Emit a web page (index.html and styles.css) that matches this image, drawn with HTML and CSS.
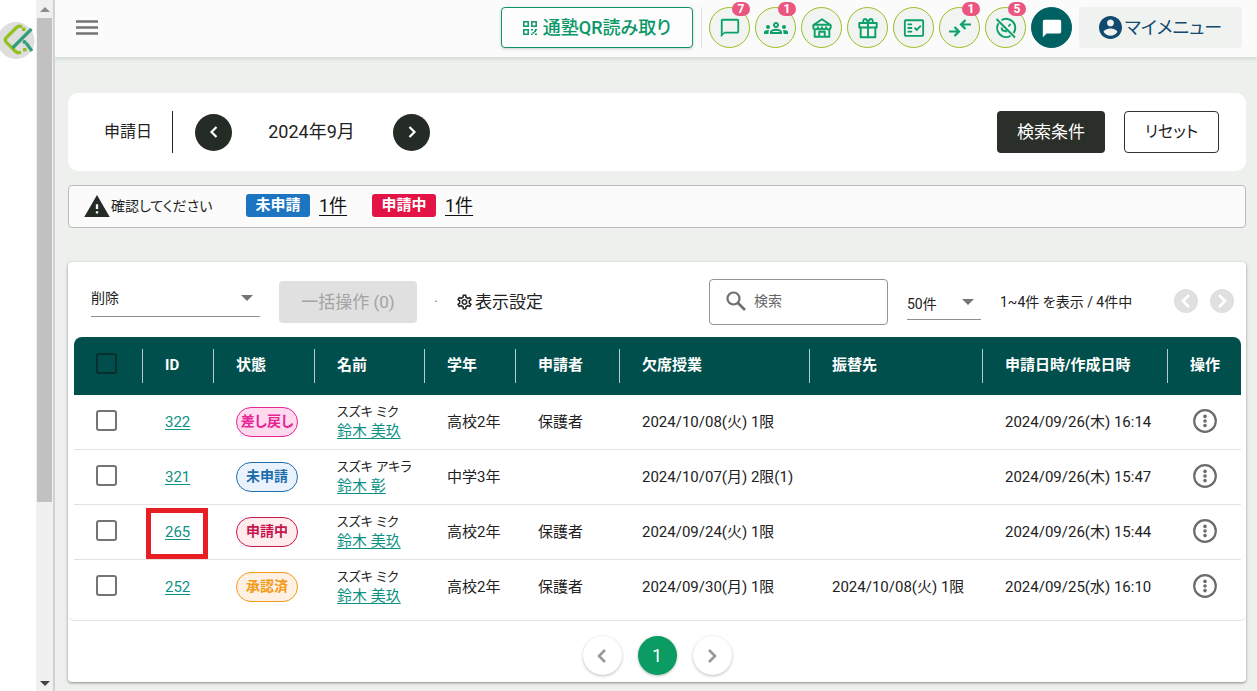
FILE: index.html
```html
<!DOCTYPE html>
<html lang="ja">
<head>
<meta charset="utf-8">
<meta name="viewport" content="width=device-width, initial-scale=1">
<title>申請一覧</title>
<link rel="stylesheet" href="styles.css">
</head>
<body>
<svg class="defs" aria-hidden="true">
  <symbol id="left" viewBox="0 0 24 24"><path d="M15 6l-6 6 6 6" fill="none" stroke="currentColor" stroke-width="2.6"/></symbol>
  <symbol id="right" viewBox="0 0 24 24"><path d="M9 6l6 6-6 6" fill="none" stroke="currentColor" stroke-width="2.6"/></symbol>
  <symbol id="more" viewBox="0 0 24 24"><circle cx="12" cy="12" r="10.8" fill="none" stroke="currentColor" stroke-width="2.2"/><g fill="currentColor"><circle cx="12" cy="7.4" r="1.8"/><circle cx="12" cy="12" r="1.8"/><circle cx="12" cy="16.6" r="1.8"/></g></symbol>
</svg>
<div class="shell">
  <aside class="rail">
    <svg class="logo" viewBox="0 0 35 37" role="img" aria-label="ロゴ">
      <circle cx="16" cy="18.5" r="18.5" fill="#dedede"/>
      <g fill="none" stroke-width="3.2">
        <path d="M22 5q-3-2-6 1L7 15q-3 2.500-1 5l9 9q3 3 6 1" stroke="#95c11f"/>
        <path d="M31.500 7L12.500 26" stroke="#2f9f78"/>
        <path d="M26 21l6 8" stroke="#2f9f78"/>
      </g>
      <g fill="#95c11f"><rect x="22" y="5.500" width="3.500" height="3.500"/><rect x="23" y="26" width="3.500" height="3.500"/></g>
      <circle cx="24.500" cy="20" r="2" fill="#2f9f78"/>
    </svg>
  </aside>
  <div class="scrollbar" aria-hidden="true"><i class="up"></i><div class="thumb"></div><i class="down"></i></div>
  <div class="page">
    <header class="topbar">
      <button class="plain menu" aria-label="メニュー"><svg viewBox="0 0 22 16"><path d="M0 1.500h22M0 7.500h22M0 13.500h22" stroke="#747474" stroke-width="2.400"/></svg></button>
      <button class="qr">
        <svg viewBox="0 0 14 14" fill="none" stroke="currentColor" stroke-width="1.500"><rect x=".8" y=".8" width="4.400" height="4.400"/><rect x="8.800" y=".8" width="4.400" height="4.400"/><rect x=".8" y="8.800" width="4.400" height="4.400"/><path d="M8 8.800h2M11 10.300h2M9.500 11.800h2M8 13.300h1.500M12 13.300h2M12 8.800h2" /></svg>
        <span>通塾QR読み取り</span>
      </button>
      <nav class="icons">
        <button class="round" aria-label="メッセージ"><svg viewBox="0 0 24 24" fill="currentColor"><path d="M20 2H4c-1.100 0-2 .9-2 2v18l4-4h14c1.100 0 2-.9 2-2V4c0-1.100-.9-2-2-2zm0 14H6l-2 2V4h16v12z"/></svg><span class="count">7</span></button>
        <button class="round" aria-label="グループ"><svg class="wide" viewBox="0 0 24 24" fill="currentColor"><path d="M4 13c1.100 0 2-.9 2-2s-.9-2-2-2-2 .9-2 2 .9 2 2 2zm1.130 1.100c-.37-.06-.74-.1-1.130-.1-.99 0-1.930.21-2.780.58C.48 14.900 0 15.620 0 16.430V18h4.500v-1.610c0-.83.23-1.610.63-2.290zM20 13c1.100 0 2-.9 2-2s-.9-2-2-2-2 .9-2 2 .9 2 2 2zm4 3.430c0-.81-.48-1.530-1.220-1.850-.85-.37-1.790-.58-2.780-.58-.39 0-.76.04-1.130.1.400.68.63 1.460.63 2.290V18H24v-1.570zm-7.760-2.780c-1.170-.52-2.610-.9-4.240-.9-1.630 0-3.070.39-4.240.9C6.680 14.130 6 15.210 6 16.390V18h12v-1.610c0-1.180-.68-2.260-1.760-2.740zM8.070 16c.09-.23.13-.39.91-.69.97-.38 1.990-.56 3.020-.56s2.050.18 3.020.56c.77.3.81.46.91.69H8.070zM12 8c.55 0 1 .45 1 1s-.45 1-1 1-1-.45-1-1 .45-1 1-1m0-2c-1.660 0-3 1.340-3 3s1.340 3 3 3 3-1.340 3-3-1.340-3-3-3z"/></svg><span class="count">1</span></button>
        <button class="round" aria-label="教室"><svg viewBox="0 0 24 24" fill="none" stroke="currentColor" stroke-width="2.100" stroke-linejoin="round"><path d="M12 2.500L3 8.500h18zM2.500 8.500v2.300c0 1.600 1.200 2.700 2.700 2.700s2.300-.9 2.300-2.300c0 1.400 1 2.300 2.300 2.300s2.200-.9 2.200-2.300c0 1.400 1 2.300 2.200 2.300s2.300-.9 2.300-2.300c0 1.400.8 2.300 2.300 2.300s2.700-1.100 2.700-2.700V8.500M4 13.500v8h16v-8M9 21v-5h6v5"/></svg></button>
        <button class="round" aria-label="ギフト"><svg viewBox="0 0 24 24" fill="none" stroke="currentColor" stroke-width="2.100" stroke-linejoin="round"><path d="M2.500 6.500h19v5h-19zM4 11.500v10.500h16V11.500M12 6.500V22M12 6C11 3 9.500 2 8 2.300S6.300 6 8 6.500M12 6c1-3 2.500-4 4-3.700s1.700 3.700 0 4.200"/></svg></button>
        <button class="round" aria-label="チェックリスト"><svg viewBox="0 0 24 24" fill="none" stroke="currentColor" stroke-width="2"><rect x="2" y="3.500" width="20" height="17" rx="1"/><path d="M5 8h5M5 12h5M5 16h5M12.500 11.500l2.500 2.500 4.500-4.500"/></svg></button>
        <button class="round" aria-label="振替"><svg class="wide" viewBox="0 0 24 24" fill="none" stroke="currentColor" stroke-width="2.200"><path d="M1 15.500h9M6.500 11l4.500 4.500L6.500 20M23 8.500h-9M17.500 4L13 8.500l4.500 4.500"/></svg><span class="count">1</span></button>
        <button class="round" aria-label="欠席"><svg class="wide" viewBox="0 0 24 24" fill="none" stroke="currentColor" stroke-width="2"><path d="M7.500 4.200a9 9 0 0 1 12 13M16.500 19.900A9 9 0 0 1 4.500 7.300M2.500 3l18.500 18.500M7.500 11.500l1 3 4.500 1M14.500 10.500l2-2.500"/></svg><span class="count">5</span></button>
        <button class="round solid" aria-label="チャット"><svg viewBox="0 0 24 24" fill="currentColor"><path d="M20 3H4c-1.100 0-2 .9-2 2v17l4-4h14c1.100 0 2-.9 2-2V5c0-1.100-.9-2-2-2z"/></svg></button>
      </nav>
      <button class="my"><svg viewBox="2 2 20 20" fill="currentColor"><path d="M12 2C6.480 2 2 6.480 2 12s4.480 10 10 10 10-4.480 10-10S17.520 2 12 2zm0 3c1.660 0 3 1.340 3 3s-1.340 3-3 3-3-1.340-3-3 1.340-3 3-3zm0 14.200c-2.500 0-4.710-1.280-6-3.220.03-1.990 4-3.080 6-3.080 1.990 0 5.970 1.090 6 3.080-1.290 1.940-3.500 3.220-6 3.220z"/></svg><span>マイメニュー</span></button>
    </header>
    <main class="content">
      <section class="card period">
        <span class="period-label">申請日</span>
        <button class="nav-dot" aria-label="前の月"><svg><use href="#left"/></svg></button>
        <span class="month">2024年9月</span>
        <button class="nav-dot" aria-label="次の月"><svg><use href="#right"/></svg></button>
        <button class="btn dark">検索条件</button>
        <button class="btn outline">リセット</button>
      </section>
      <section class="notice">
        <svg class="warn" viewBox="1 2 22 19" fill="#252b25"><path d="M1 21h22L12 2 1 21zm12-3h-2v-2h2v2zm0-4h-2v-4h2v4z"/></svg>
        <span class="notice-text">確認してください</span>
        <span class="tag blue">未申請</span><a href="#" class="num">1件</a>
        <span class="tag red">申請中</span><a href="#" class="num">1件</a>
      </section>
      <section class="card list">
        <div class="tools">
          <div class="select bulk"><select aria-label="操作"><option>削除</option></select></div>
          <button class="btn off" disabled>一括操作 (0)</button>
          <span class="dot">·</span>
          <button class="plain settings"><svg viewBox="2 2 20 20" fill="currentColor"><path d="M19.430 12.980c.04-.32.07-.64.07-.98 0-.34-.03-.66-.07-.98l2.110-1.650c.19-.15.24-.42.12-.64l-2-3.460c-.09-.16-.26-.25-.44-.25-.06 0-.12.01-.17.03l-2.490 1c-.52-.4-1.080-.73-1.690-.98l-.38-2.650C14.460 2.180 14.250 2 14 2h-4c-.25 0-.46.18-.49.42l-.38 2.650c-.61.25-1.170.59-1.690.98l-2.490-1c-.06-.02-.12-.03-.18-.03-.17 0-.34.09-.43.25l-2 3.460c-.13.22-.07.49.12.64l2.110 1.650c-.04.32-.07.65-.07.98 0 .33.03.66.07.98l-2.110 1.650c-.19.15-.24.42-.12.64l2 3.460c.09.16.26.25.44.25.06 0 .12-.01.17-.03l2.490-1c.52.4 1.080.73 1.690.98l.38 2.650c.03.24.24.42.49.42h4c.25 0 .46-.18.49-.42l.38-2.650c.61-.25 1.170-.59 1.690-.98l2.490 1c.06.02.12.03.18.03.17 0 .34-.09.43-.25l2-3.460c.12-.22.07-.49-.12-.64l-2.110-1.650zm-1.980-1.710c.04.31.05.52.05.73 0 .21-.02.43-.05.73l-.14 1.130.89.7 1.080.84-.7 1.210-1.270-.51-1.040-.42-.9.68c-.43.32-.84.56-1.250.73l-1.060.43-.16 1.130-.2 1.350h-1.400l-.19-1.350-.16-1.130-1.060-.43c-.43-.18-.83-.41-1.230-.71l-.91-.7-1.060.43-1.270.51-.7-1.210 1.080-.84.89-.7-.14-1.130c-.03-.31-.05-.54-.05-.74s.02-.43.05-.73l.14-1.130-.89-.7-1.080-.84.7-1.210 1.270.51 1.040.42.9-.68c.43-.32.84-.56 1.250-.73l1.060-.43.16-1.130.2-1.350h1.390l.19 1.350.16 1.130 1.060.43c.43.18.83.41 1.230.71l.91.7 1.060-.43 1.270-.51.7 1.210-1.070.85-.89.7.14 1.130zM12 8c-2.210 0-4 1.790-4 4s1.790 4 4 4 4-1.790 4-4-1.790-4-4-4zm0 6c-1.100 0-2-.9-2-2s.9-2 2-2 2 .9 2 2-.9 2-2 2z"/></svg><span>表示設定</span></button>
          <label class="search"><svg viewBox="0 0 20 20" fill="none" stroke="#6f6f6f" stroke-width="2.200"><circle cx="7.500" cy="7.500" r="6"/><path d="M12 12l7 7" stroke-width="2.600"/></svg><input type="text" placeholder="検索" aria-label="検索"></label>
          <div class="select size"><select aria-label="表示件数"><option>50件</option></select></div>
          <span class="range">1~4件 を表示 / 4件中</span>
          <div class="mini-nav"><button disabled aria-label="前へ"><svg><use href="#left"/></svg></button><button disabled aria-label="次へ"><svg><use href="#right"/></svg></button></div>
        </div>
        <div class="table-wrap">
        <table>
          <colgroup><col class="c-check"><col class="c-id"><col class="c-state"><col class="c-name"><col class="c-grade"><col class="c-by"><col class="c-absent"><col class="c-makeup"><col class="c-date"><col class="c-act"></colgroup>
          <thead><tr><th><input type="checkbox" aria-label="すべて選択"></th><th>ID</th><th>状態</th><th>名前</th><th>学年</th><th>申請者</th><th>欠席授業</th><th>振替先</th><th>申請日時/作成日時</th><th>操作</th></tr></thead>
          <tbody>
            <tr><td><input type="checkbox" aria-label="322を選択"></td><td><a href="#">322</a></td><td><span class="pill pink">差し戻し</span></td><td><span class="kana">スズキ ミク</span><a href="#">鈴木 美玖</a></td><td>高校2年</td><td>保護者</td><td>2024/10/08(火) 1限</td><td></td><td>2024/09/26(木) 16:14</td><td><button class="plain more" aria-label="操作"><svg><use href="#more"/></svg></button></td></tr>
            <tr><td><input type="checkbox" aria-label="321を選択"></td><td><a href="#">321</a></td><td><span class="pill sky">未申請</span></td><td><span class="kana">スズキ アキラ</span><a href="#">鈴木 彰</a></td><td>中学3年</td><td></td><td>2024/10/07(月) 2限(1)</td><td></td><td>2024/09/26(木) 15:47</td><td><button class="plain more" aria-label="操作"><svg><use href="#more"/></svg></button></td></tr>
            <tr><td><input type="checkbox" aria-label="265を選択"></td><td class="marked"><a href="#">265</a></td><td><span class="pill rose">申請中</span></td><td><span class="kana">スズキ ミク</span><a href="#">鈴木 美玖</a></td><td>高校2年</td><td>保護者</td><td>2024/09/24(火) 1限</td><td></td><td>2024/09/26(木) 15:44</td><td><button class="plain more" aria-label="操作"><svg><use href="#more"/></svg></button></td></tr>
            <tr><td><input type="checkbox" aria-label="252を選択"></td><td><a href="#">252</a></td><td><span class="pill amber">承認済</span></td><td><span class="kana">スズキ ミク</span><a href="#">鈴木 美玖</a></td><td>高校2年</td><td>保護者</td><td>2024/09/30(月) 1限</td><td>2024/10/08(火) 1限</td><td>2024/09/25(水) 16:10</td><td><button class="plain more" aria-label="操作"><svg><use href="#more"/></svg></button></td></tr>
          </tbody>
        </table>
        </div>
        <nav class="pager" aria-label="ページ"><button aria-label="前のページ"><svg><use href="#left"/></svg></button><button class="current">1</button><button aria-label="次のページ"><svg><use href="#right"/></svg></button></nav>
      </section>
    </main>
  </div>
</div>
</body>
</html>
```

FILE: styles.css
```css
* { box-sizing: border-box; }
body {
  margin: 0;
  background: #edf0ec;
  color: #222;
  font-family: Roboto, "Noto Sans CJK JP", sans-serif;
  font-size: 15px;
  line-height: 20px;
  font-feature-settings: "palt";
}
button, input, select { font: inherit; font-feature-settings: inherit; color: inherit; }
button { padding: 0; border: 0; cursor: pointer; white-space: nowrap; }
svg { display: block; flex: none; }
.defs { position: absolute; width: 0; height: 0; }
.plain { background: none; }

.shell { display: flex; min-height: 100vh; }
.rail { width: 36px; flex: none; background: #fff; padding-top: 22px; }
.logo { width: 35px; height: 37px; }
.scrollbar {
  width: 19px;
  flex: none;
  display: flex;
  flex-direction: column;
  align-items: center;
  background: #f0f0f0;
  border-right: 2px solid #d0d1d0;
}
.scrollbar i { border: 5px solid transparent; }
.scrollbar .up { margin: 7px 0 6px; border-top-width: 0; border-bottom-color: #8c8c8c; }
.scrollbar .thumb { width: 15px; flex: 0 0 70%; background: #c1c1c1; }
.scrollbar .down { margin: auto 0 5px; border-top-color: #444; border-bottom-width: 0; }
.page { flex: 1; min-width: 0; }

.topbar {
  display: flex;
  align-items: center;
  height: 57px;
  padding: 0 15px 2px 21px;
  background: #fafbfa;
  box-shadow: 0 2px 4px #cfdad6;
}
.menu svg { width: 22px; height: 16px; }
.qr {
  display: flex;
  align-items: center;
  justify-content: center;
  gap: 6px;
  width: 192px;
  height: 41px;
  margin-left: auto;
  border: 1px solid #0f9468;
  border-radius: 4px;
  background: #fcfdfc;
  box-shadow: 0 1px 3px #ccc;
  color: #0b9767;
  font-size: 18px;
  font-weight: 500;
}
.qr svg { width: 14px; height: 14px; }
.icons { display: flex; gap: 5px; margin-left: 8px; padding-left: 7px; border-left: 1px solid #dfe3e0; }
.round {
  position: relative;
  display: grid;
  place-items: center;
  width: 41px;
  height: 41px;
  border: 1px solid #98bf20;
  border-radius: 50%;
  background: #f1f4f1;
  color: #0ca168;
}
.round svg { width: 22px; height: 22px; }
.round .wide { width: 24px; height: 24px; }
.round.solid { background: #006163; border-color: #006163; color: #fff; }
.count {
  position: absolute;
  top: -6px;
  right: -1px;
  width: 18px;
  height: 14px;
  border-radius: 7px;
  background: #eb5680;
  color: #fff;
  font-size: 12px;
  font-weight: 700;
  line-height: 14px;
  text-align: center;
}
.my {
  display: flex;
  align-items: center;
  justify-content: center;
  gap: 3px;
  width: 163px;
  height: 41px;
  margin-left: 7px;
  border-radius: 4px;
  background: #eff2ef;
  color: #11496f;
  font-size: 18px;
}
.my svg { width: 23px; height: 23px; }

.content { padding: 36px 11px 9px 13px; }
.card { background: #fff; }
.period {
  display: flex;
  align-items: center;
  height: 78px;
  padding: 0 27px 0 36px;
  border-radius: 10px;
}
.period-label { padding: 11px 20px 11px 0; border-right: 1px solid #222; margin-right: 22px; font-size: 16px; }
.nav-dot {
  display: grid;
  place-items: center;
  width: 37px;
  height: 37px;
  border-radius: 50%;
  background: #252b25;
  color: #fff;
}
.nav-dot svg { width: 20px; height: 20px; }
.month { width: 161px; padding-right: 2px; text-align: center; font-size: 18px; }
.btn { height: 42px; border-radius: 4px; font-size: 17px; }
.dark { width: 108px; margin-left: auto; background: #2b2f29; color: #fff; }
.outline { width: 95px; margin-left: 19px; border: 1px solid #333; background: #fff; font-size: 16px; }

.notice {
  display: flex;
  align-items: center;
  height: 43px;
  margin-top: 14px;
  padding: 0 15px 2px;
  border: 1px solid #b9bcb8;
  border-radius: 4px;
  background: #fafbfa;
}
.warn { width: 26px; height: 22px; }
.notice-text { width: 135px; margin-left: 1px; font-size: 14px; }
.tag { width: 64px; height: 23px; border-radius: 3px; color: #fff; font-weight: 700; line-height: 22px; text-align: center; }
.blue { background: #1b75c0; }
.red { background: #e31445; }
.num { width: 31px; margin: 0 22px 0 9px; color: #111; font-size: 18px; text-underline-offset: 3px; }

.list { margin-top: 34px; border-radius: 4px; box-shadow: 0 1px 3px #888; }
.tools { display: flex; align-items: center; padding: 17px 12px 12px 23px; }
.select { position: relative; }
.select::after {
  content: "";
  position: absolute;
  right: 7px;
  top: 16px;
  border: 6px solid transparent;
  border-top-color: #757575;
  border-bottom-width: 0;
  pointer-events: none;
}
.select select {
  display: block;
  appearance: none;
  width: 100%;
  height: 38px;
  padding: 0;
  border: 0;
  border-bottom: 1px solid #8f8f8f;
  border-radius: 0;
  background: none;
  font-size: 14px;
}
.bulk { width: 169px; margin-bottom: 8px; }
.size { width: 74px; margin: 4px 0 0 19px; }
.size select { height: 32px; }
.size::after { top: 11px; }
.off { width: 138px; margin-left: 19px; background: #e0e0e0; color: #a3a3a3; }
.dot { width: 40px; padding-right: 2px; text-align: center; color: #888; }
.settings { display: flex; align-items: center; gap: 3px; font-size: 17px; }
.settings svg { width: 15px; height: 16px; }
.search {
  display: flex;
  align-items: center;
  gap: 8px;
  width: 179px;
  height: 46px;
  margin-left: auto;
  padding: 0 16px 2px;
  border: 1px solid #949494;
  border-radius: 4px;
}
.search svg { width: 20px; height: 20px; }
.search input { width: 100%; min-width: 0; padding: 0; border: 0; outline: 0; background: none; font-size: 14px; }
.search input::placeholder { color: #666; opacity: 1; }
.range { width: 174px; margin-left: 19px; font-size: 14px; white-space: nowrap; }
.mini-nav { display: flex; gap: 12px; padding-bottom: 2px; }
.mini-nav button { display: grid; place-items: center; width: 24px; height: 24px; border-radius: 50%; background: #e0e0e0; color: #fff; }
.mini-nav svg { width: 24px; height: 24px; }

.table-wrap { padding: 0 5px 5px 6px; border-bottom: 1px solid #e4e4e4; border-radius: 0 0 6px 6px; }
table { width: 100%; table-layout: fixed; border-collapse: separate; border-spacing: 0; }
.c-check { width: 68px; }
.c-id { width: 71px; }
.c-state { width: 101px; }
.c-name { width: 110px; }
.c-grade { width: 91px; }
.c-by { width: 104px; }
.c-absent { width: 190px; }
.c-makeup { width: 173px; }
.c-date { width: 185px; }
.c-act { width: 74px; }
th, td { padding: 0 0 0 23px; text-align: left; white-space: nowrap; }
th:first-child, td:first-child { padding-left: 22px; }
th {
  height: 58px;
  padding-bottom: 2px;
  background: linear-gradient(#b5cdcb, #b5cdcb) left center / 1px 34px no-repeat #004f4c;
  color: #fff;
  font-weight: 700;
}
th:first-child { background: #004f4c; border-top-left-radius: 8px; }
th:last-child { border-top-right-radius: 8px; }
td { height: 55px; border-bottom: 1px solid #e2e2e2; }
tr:last-child td { border-bottom-color: transparent; }
td a { color: #0b9285; text-underline-offset: 2px; }
td input, th input {
  appearance: none;
  display: block;
  width: 21px;
  height: 21px;
  margin: 0 0 3px;
  border: 2px solid #747474;
  border-radius: 3px;
}
th input { border-color: #062f2d; }
.kana { display: block; font-size: 13px; line-height: 18px; }
.kana + a { line-height: 18px; }
.marked { position: relative; }
.marked::after { content: ""; position: absolute; inset: 3px 5px 0 4px; border: 5px solid #e71f24; pointer-events: none; }
.pill {
  display: block;
  width: 62px;
  height: 30px;
  border: 1px solid;
  border-radius: 15px;
  font-size: 14px;
  font-weight: 700;
  line-height: 27px;
  text-align: center;
}
.pink { color: #e62595; background: #ffd9ee; }
.sky { color: #1d6dab; background: #eaf3fd; }
.rose { color: #c8154d; background: #ffeced; }
.amber { color: #f39a16; background: #fff0e4; }
.more { display: block; margin: 0 0 3px 3px; color: #6c6c6c; }
.more svg { width: 24px; height: 24px; }

.pager { display: flex; justify-content: center; gap: 16px; padding: 15px 0 7px; }
.pager button {
  display: grid;
  place-items: center;
  width: 39px;
  height: 39px;
  border-radius: 50%;
  background: #fff;
  color: #999;
  box-shadow: 0 1px 3px #bbb;
  font-size: 18px;
}
.pager .current { background: #0a9c62; color: #fff; }
.pager svg { width: 24px; height: 24px; }
```
